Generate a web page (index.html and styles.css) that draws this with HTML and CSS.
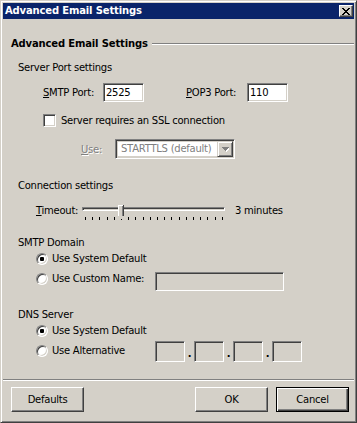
FILE: index.html
```html
<!DOCTYPE html>
<html>
<head>
<meta charset="utf-8">
<link rel="stylesheet" href="styles.css">
</head>
<body>
<div class="window">
  <div class="titlebar">
    <span class="title">Advanced Email Settings</span>
    <div class="close">
      <svg width="8" height="7" viewBox="0 0 8 7" shape-rendering="crispEdges">
        <path d="M0 0h2v1H0zM6 0h2v1H6zM1 1h2v1H1zM5 1h2v1H5zM2 2h4v1H2zM3 3h2v1H3zM2 4h4v1H2zM1 5h2v1H1zM5 5h2v1H5zM0 6h2v1H0zM6 6h2v1H6z" fill="#000"/>
      </svg>
    </div>
  </div>
  <div class="content">
    <div class="group-head"><span>Advanced Email Settings</span><span class="rule"></span></div>
    <div class="section">
      <div class="sec-title first">Server Port settings</div>
      <div class="ports">
        <span class="lbl-smtp"><u>S</u>MTP Port:</span>
        <span class="field port">2525</span>
        <span class="lbl-pop"><u>P</u>OP3 Port:</span>
        <span class="field port">110</span>
      </div>
      <div class="check-row">
        <span class="checkbox"></span>
        <span class="check-text">Server requires an SSL connection</span>
      </div>
      <div class="use-row">
        <span class="lbl-use disabled"><u>U</u>se:</span>
        <div class="combo">
          <span class="combo-text">STARTTLS (default)</span>
          <span class="combo-btn">
            <svg width="7" height="5" viewBox="0 0 7 5" shape-rendering="crispEdges">
              <path d="M1 1h7v1H1zM2 2h5v1H2zM3 3h3v1H3zM4 4h1v1H4z" fill="#fff"/>
              <path d="M0 0h7v1H0zM1 1h5v1H1zM2 2h3v1H2zM3 3h1v1H3z" fill="#808080"/>
            </svg>
          </span>
        </div>
      </div>

      <div class="sec-title conn">Connection settings</div>
      <div class="timeout-row">
        <span class="lbl-timeout"><u>T</u>imeout:</span>
        <div class="slider">
          <div class="track"></div>
          <div class="ticks">
            <i></i><i></i><i></i><i></i><i></i><i></i><i></i><i></i><i></i><i></i>
            <i></i><i></i><i></i><i></i><i></i><i></i><i></i><i></i><i></i><i></i>
          </div>
          <svg class="thumb" width="6" height="14" viewBox="0 0 6 14" shape-rendering="crispEdges">
            <path d="M0 0h6v11l-3 3l-3-3z" fill="#d4d0c8"/>
            <path d="M0 0h5v1H1v10H0z" fill="#fff"/>
            <path d="M5 0h1v11H5z" fill="#404040"/>
            <path d="M4 1h1v10H4z" fill="#808080"/>
          </svg>
        </div>
        <span class="minutes">3 minutes</span>
      </div>

      <div class="sec-title smtp">SMTP Domain</div>
      <div class="radio-row r1">
        <span class="radio checked"></span>
        <span class="radio-text">Use System Default</span>
      </div>
      <div class="radio-row r2">
        <span class="radio"></span>
        <span class="radio-text fixed">Use Custom Name:</span>
        <span class="field off custom"></span>
      </div>

      <div class="sec-title dns">DNS Server</div>
      <div class="radio-row r1">
        <span class="radio checked"></span>
        <span class="radio-text">Use System Default</span>
      </div>
      <div class="radio-row r3">
        <span class="radio"></span>
        <span class="radio-text fixed">Use Alternative</span>
        <div class="ip">
          <span class="field off oct"></span><span class="dot">.</span>
          <span class="field off oct"></span><span class="dot">.</span>
          <span class="field off oct"></span><span class="dot">.</span>
          <span class="field off oct"></span>
        </div>
      </div>
    </div>
  </div>
  <div class="sep"></div>
  <div class="buttons">
    <span class="btn">Defaults</span>
    <span class="spacer"></span>
    <span class="btn">OK</span>
    <span class="btn default">Cancel</span>
  </div>
</div>
</body>
</html>
```
FILE: styles.css
```css
* { box-sizing: border-box; }
html, body { margin: 0; padding: 0; }
body {
  font-family: "DejaVu Sans", sans-serif;
  font-size: 10px;
  line-height: 13px;
  letter-spacing: -0.25px;
  color: #000;
  background: #d4d0c8;
}
u { text-decoration: underline; text-underline-offset: 1px; }

.window {
  width: 357px;
  height: 423px;
  border: 1px solid;
  border-color: #d4d0c8 #404040 #404040 #d4d0c8;
  box-shadow: inset 1px 1px #fff, inset -1px -1px #808080;
  padding: 2px;
  display: flex;
  flex-direction: column;
  background: #d4d0c8;
}

.titlebar {
  height: 16px;
  background: #0a246a;
  display: flex;
  align-items: center;
  padding: 0 1px 0 2px;
  color: #fff;
  font-weight: bold;
  letter-spacing: -0.15px;
}
.title { flex: 1; line-height: 16px; }
.close {
  width: 14px;
  height: 12px;
  background: #d4d0c8;
  border: 1px solid;
  border-color: #fff #404040 #404040 #fff;
  box-shadow: inset -1px -1px #808080;
  display: flex;
  align-items: center;
  justify-content: center;
}
.close svg { display: block; margin-left: -1px; }

.content { flex: 1; padding: 18px 0 0 8px; }

.group-head {
  display: flex;
  align-items: center;
  font-weight: bold;
  letter-spacing: -0.15px;
}
.rule {
  flex: 1;
  margin-left: 4px;
  border-top: 1px solid #808080;
  border-bottom: 1px solid #fff;
}

.section { padding-left: 7px; }
.sec-title.first { margin-top: 11px; }
.sec-title.conn { margin-top: 20px; }
.sec-title.smtp { margin-top: 13px; }
.sec-title.dns { margin-top: 17px; }

.field {
  display: block;
  height: 19px;
  background: #fff;
  border: 1px solid;
  border-color: #808080 #fff #fff #808080;
  box-shadow: inset 1px 1px #404040, inset -1px -1px #d4d0c8;
  padding-left: 2px;
  line-height: 17px;
}
.field.off { background: #d4d0c8; }

.ports {
  margin-top: 9px;
  display: flex;
  align-items: center;
  height: 19px;
  padding-left: 25px;
}
.lbl-smtp { width: 60px; }
.lbl-pop { width: 61px; margin-left: 42px; }
.port { width: 41px; }

.check-row {
  margin-top: 12px;
  display: flex;
  align-items: center;
  height: 13px;
  padding-left: 25px;
}
.checkbox {
  width: 13px;
  height: 13px;
  background: #fff;
  border: 1px solid;
  border-color: #808080 #fff #fff #808080;
  box-shadow: inset 1px 1px #404040, inset -1px -1px #d4d0c8;
}
.check-text { margin-left: 5px; }

.use-row {
  margin-top: 12px;
  display: flex;
  align-items: center;
  height: 20px;
  padding-left: 63px;
}
.disabled { color: #808080; text-shadow: 1px 1px #fff; }
.lbl-use { width: 34px; }
.combo {
  width: 120px;
  height: 20px;
  background: #d4d0c8;
  border: 1px solid;
  border-color: #808080 #fff #fff #808080;
  box-shadow: inset 1px 1px #404040, inset -1px -1px #d4d0c8;
  padding: 1px;
  display: flex;
  align-items: stretch;
}
.combo-text {
  flex: 1;
  color: #808080;
  padding-left: 3px;
  background: #fff;
  margin: 1px 0 1px 1px;
  line-height: 14px;
}
.combo-btn {
  width: 16px;
  background: #d4d0c8;
  border: 1px solid;
  border-color: #d4d0c8 #404040 #404040 #d4d0c8;
  box-shadow: inset 1px 1px #fff, inset -1px -1px #808080;
  display: flex;
  align-items: center;
  justify-content: center;
}
.combo-btn svg { display: block; }

.timeout-row {
  margin-top: 11px;
  display: flex;
  height: 20px;
  padding-left: 18px;
}
.lbl-timeout { width: 46px; padding-top: 1px; }
.slider { position: relative; width: 143px; }
.track {
  margin-top: 4px;
  height: 4px;
  border-top: 1px solid #808080;
  border-left: 1px solid #808080;
  border-bottom: 1px solid #fff;
  border-right: 1px solid #fff;
  box-shadow: inset 1px 1px #404040;
  background: #d4d0c8;
}
.ticks {
  margin-top: 6px;
  height: 3px;
  padding: 0 2px 0 3px;
  display: flex;
  justify-content: space-between;
}
.ticks i { display: block; width: 1px; height: 3px; background: #000; }
.thumb { position: absolute; left: 36px; top: 2px; display: block; }
.minutes { margin-left: 10px; padding-top: 1px; }

.radio-row { display: flex; align-items: flex-start; padding-left: 18px; }
.radio-row.r1 { margin-top: 3px; height: 13px; }
.radio-row.r2 { margin-top: 7px; height: 19px; }
.radio-row.r3 { margin-top: 4px; height: 21px; }
.radio {
  width: 12px;
  height: 12px;
  margin-top: 1px;
  border-radius: 50%;
  background: #fff;
  border: 1px solid;
  border-color: #808080 #fff #fff #808080;
  box-shadow: inset 1px 1px #404040, inset -1px -1px #d4d0c8;
  display: flex;
  align-items: center;
  justify-content: center;
}
.radio.checked::after {
  content: "";
  width: 4px;
  height: 4px;
  border-radius: 1px;
  background: #000;
}
.r3 .radio { margin-top: 4px; }
.radio-text { margin-left: 4px; }
.radio-text.fixed { width: 103px; }
.r3 .radio-text { margin-top: 3px; }
.custom { width: 129px; }

.ip { display: flex; }
.oct { width: 30px; height: 21px; }
.dot {
  width: 9px;
  text-align: center;
  font-weight: bold;
  line-height: 21px;
  padding-top: 2px;
}

.sep {
  height: 2px;
  border-top: 1px solid #808080;
  border-bottom: 1px solid #fff;
}
.buttons {
  display: flex;
  padding: 6px 5px 8px 8px;
}
.spacer { flex: 1; }
.btn {
  width: 73px;
  height: 25px;
  background: #d4d0c8;
  border: 1px solid;
  border-color: #fff #404040 #404040 #fff;
  box-shadow: inset -1px -1px #808080;
  display: flex;
  align-items: center;
  justify-content: center;
}
.btn + .btn { margin-left: 8px; }
.btn.default {
  border-color: #000;
  box-shadow: inset 1px 1px #fff, inset -1px -1px #404040, inset -2px -2px #808080;
}
```
